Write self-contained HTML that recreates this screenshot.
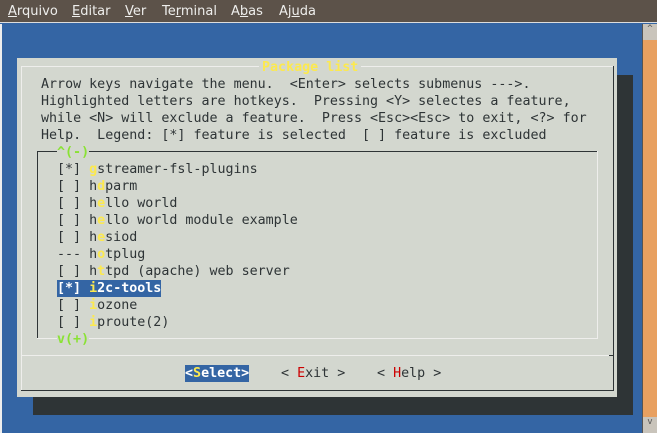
<!DOCTYPE html>
<html><head><meta charset="utf-8"><style>
*{margin:0;padding:0;box-sizing:border-box}
body{width:657px;height:433px;overflow:hidden;background:#3465a4;position:relative;font-family:"DejaVu Sans Mono","Liberation Mono",monospace;font-size:13.33px;color:#2e3436}
.a{position:absolute}
.menu{left:0;top:0;width:657px;height:23px;background:#5c5249;border-bottom:1px solid #ddd;font-family:"DejaVu Sans","Liberation Sans",sans-serif;font-size:13px;color:#eeeeec}
.menu span{position:absolute;top:4px}
.r{position:absolute;white-space:pre;line-height:17px;height:17px;margin-top:1px}
.y{color:#fce94f;font-weight:bold}
.g{color:#8ae234;font-weight:bold}
.rd{color:#cc0000}
.sel{background:#3465a4;color:#fff;font-weight:bold}
.w{background:#eeeeec}
.d{background:#2e3436}
</style></head><body>
<div class="a menu"><span style="left:8px"><u>A</u>rquivo</span><span style="left:72px"><u>E</u>ditar</span><span style="left:125px"><u>V</u>er</span><span style="left:162px">Te<u>r</u>minal</span><span style="left:231px">A<u>b</u>as</span><span style="left:279px">Aj<u>u</u>da</span></div>
<div class="a" style="left:0;top:24px;width:2px;height:409px;background:#eee"></div>
<div class="a" style="left:642px;top:24px;width:15px;height:409px;background:#e8a060;border-left:1px solid #555"></div>
<div class="a" style="left:643px;top:24px;width:14px;height:16px;background:#c9c4bb;color:#555;font-size:9px;text-align:center">^</div>
<div class="a" style="left:643px;top:417px;width:14px;height:16px;background:#c9c4bb;color:#555;font-size:9px;text-align:center">v</div>
<div class="a d" style="left:33px;top:75px;width:600px;height:340px"></div>
<div class="a" style="left:17px;top:58px;width:600px;height:339px;background:#d3d7cf"></div>
<div class="a w" style="left:21px;top:66px;width:592px;height:1px"></div>
<div class="a w" style="left:21px;top:66px;width:1px;height:324px"></div>
<div class="a d" style="left:613px;top:66px;width:1px;height:325px"></div>
<div class="a d" style="left:21px;top:390px;width:593px;height:1px"></div>
<div class="r y" style="left:262px;top:58px;background:#d3d7cf;padding:0 3px;margin-left:-3px">Package list</div>
<div class="r" style="left:41px;top:75px">Arrow keys navigate the menu.  &lt;Enter&gt; selects submenus ---&gt;.</div>
<div class="r" style="left:41px;top:92px">Highlighted letters are hotkeys.  Pressing &lt;Y&gt; selectes a feature,</div>
<div class="r" style="left:41px;top:109px">while &lt;N&gt; will exclude a feature.  Press &lt;Esc&gt;&lt;Esc&gt; to exit, &lt;?&gt; for</div>
<div class="r" style="left:41px;top:126px">Help.  Legend: [*] feature is selected  [ ] feature is excluded</div>
<div class="a d" style="left:37px;top:151px;width:560px;height:1px"></div>
<div class="a d" style="left:37px;top:151px;width:1px;height:188px"></div>
<div class="a w" style="left:37px;top:338px;width:561px;height:1px"></div>
<div class="a w" style="left:597px;top:151px;width:1px;height:188px"></div>
<div class="r g" style="left:57px;top:143px;background:#d3d7cf">^(-)</div>
<div class="r" style="left:57px;top:160px">[*] <span class="y">g</span>streamer-fsl-plugins</div>
<div class="r" style="left:57px;top:177px">[ ] h<span class="y">d</span>parm</div>
<div class="r" style="left:57px;top:194px">[ ] h<span class="y">e</span>llo world</div>
<div class="r" style="left:57px;top:211px">[ ] h<span class="y">e</span>llo world module example</div>
<div class="r" style="left:57px;top:228px">[ ] h<span class="y">e</span>siod</div>
<div class="r" style="left:57px;top:245px">--- h<span class="y">o</span>tplug</div>
<div class="r" style="left:57px;top:262px">[ ] h<span class="y">t</span>tpd (apache) web server</div>
<div class="r sel" style="left:57px;top:279px">[*] <span class="y">i</span>2c-tools</div>
<div class="r" style="left:57px;top:296px">[ ] <span class="y">i</span>ozone</div>
<div class="r" style="left:57px;top:313px">[ ] <span class="y">i</span>proute(2)</div>
<div class="r g" style="left:57px;top:330px;background:#d3d7cf">v(+)</div>
<div class="a w" style="left:21px;top:355px;width:590px;height:1px"></div>
<div class="a d" style="left:609px;top:355px;width:5px;height:1px"></div>
<div class="r sel" style="left:185px;top:364px">&lt;<span class="y">S</span>elect&gt;</div>
<div class="r" style="left:281px;top:364px">&lt; <span class="rd">E</span>xit &gt;</div>
<div class="r" style="left:377px;top:364px">&lt; <span class="rd">H</span>elp &gt;</div>
</body></html>
